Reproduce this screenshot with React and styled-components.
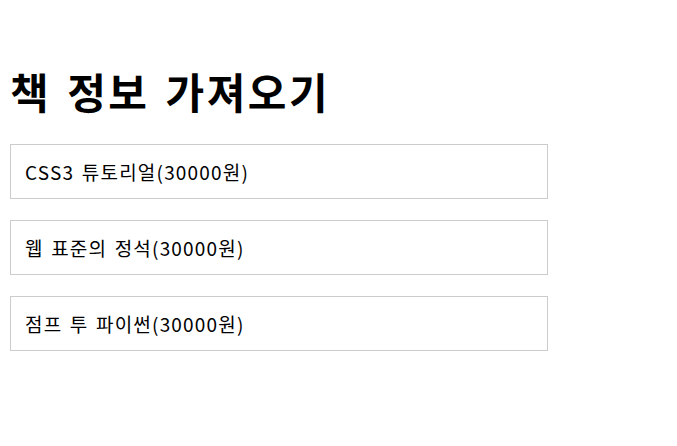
import React from 'react';
import styled, { createGlobalStyle } from 'styled-components';

const GlobalStyle = createGlobalStyle`
  body {
    margin: 8px;
    background: #fff;
    color: #000;
    font-family: "Noto Sans CJK KR", "Noto Sans", sans-serif;
  }
`;

const Page = styled.div`
  padding: 0 2px;
`;

const Title = styled.h1`
  font-size: 42px;
  font-weight: 700;
  line-height: 56px;
  letter-spacing: 2.5px;
  word-spacing: 4px;
  margin: 55px 0 25px;
`;

const BookList = styled.ul`
  list-style: none;
  margin: 0;
  padding: 0;
  display: flex;
  flex-direction: column;
  gap: 21px;
`;

const BookItem = styled.li`
  box-sizing: border-box;
  width: 538px;
  height: 55px;
  border: 1px solid #cccccc;
  padding: 0 14px;
  display: flex;
  align-items: center;
  font-size: 19px;
  letter-spacing: 1.2px;
  word-spacing: 2px;
`;

const books = [
  { title: 'CSS3 튜토리얼', price: 30000 },
  { title: '웹 표준의 정석', price: 30000 },
  { title: '점프 투 파이썬', price: 30000 },
];

const App = () => (
  <Page>
    <GlobalStyle />
    <Title>책 정보 가져오기</Title>
    <BookList>
      {books.map((book) => (
        <BookItem key={book.title}>
          {book.title}({book.price}원)
        </BookItem>
      ))}
    </BookList>
  </Page>
);

export default App;
